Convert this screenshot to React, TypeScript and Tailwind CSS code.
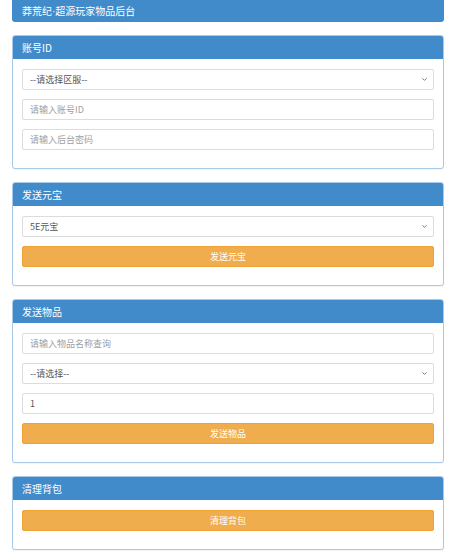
import { ChevronDown } from "lucide-react"

const FONT = "font-['Microsoft_YaHei','Noto_Sans_CJK_SC','Liberation_Sans',sans-serif]"

function Panel({ title, children }: { title: string; children: React.ReactNode }) {
  return (
    <div className="mt-[13px] border border-[#a9c9e9] rounded-[3px] bg-white shadow-[0_1px_1px_rgba(0,0,0,0.05)] overflow-hidden">
      <div className="h-[23px] bg-[#428bca] text-white text-[10px] leading-[23px] pl-[9px]">{title}</div>
      <div className="pt-[10px] px-[9px] pb-[9px]">{children}</div>
    </div>
  )
}

function Select({ value }: { value: string }) {
  return (
    <div className="relative mb-[9px] h-[21px]">
      <select
        defaultValue={value}
        className="appearance-none block w-full h-[21px] border border-[#dcdcdc] rounded-[2px] bg-white pl-[7px] py-0 text-[9px] leading-[19px] text-[#555] outline-none"
      >
        <option>{value}</option>
      </select>
      <ChevronDown className="absolute right-[6px] top-[7px] w-[7px] h-[7px] text-[#666] pointer-events-none" strokeWidth={3} />
    </div>
  )
}

function Input({ placeholder, value }: { placeholder?: string; value?: string }) {
  return (
    <input
      defaultValue={value}
      placeholder={placeholder}
      className="block w-full h-[21px] mb-[9px] border border-[#dcdcdc] rounded-[2px] bg-white pl-[7px] py-0 text-[9px] text-[#555] placeholder:text-[#a0a0a0] outline-none"
    />
  )
}

function Button({ label }: { label: string }) {
  return (
    <button className="block w-full h-[21px] mb-[9px] rounded-[2px] bg-[#f0ad4e] border border-[#eea236] text-white text-[9px] leading-[19px]">
      {label}
    </button>
  )
}

export default function App() {
  return (
    <div className={`${FONT} w-[453px] min-h-[556px] bg-white pl-[12px] pr-[9px]`}>
      <div className="h-[22px] bg-[#428bca] rounded-b-[3px] text-white text-[10px] leading-[22px] pl-[10px]">
        莽荒纪<span className="font-['Liberation_Sans',sans-serif]">·</span>超源玩家物品后台
      </div>

      <Panel title="账号ID">
        <Select value="--请选择区服--" />
        <Input placeholder="请输入账号ID" />
        <Input placeholder="请输入后台密码" />
      </Panel>

      <Panel title="发送元宝">
        <Select value="5E元宝" />
        <Button label="发送元宝" />
      </Panel>

      <Panel title="发送物品">
        <Input placeholder="请输入物品名称查询" />
        <Select value="--请选择--" />
        <Input value="1" />
        <Button label="发送物品" />
      </Panel>

      <Panel title="清理背包">
        <Button label="清理背包" />
      </Panel>
    </div>
  )
}
